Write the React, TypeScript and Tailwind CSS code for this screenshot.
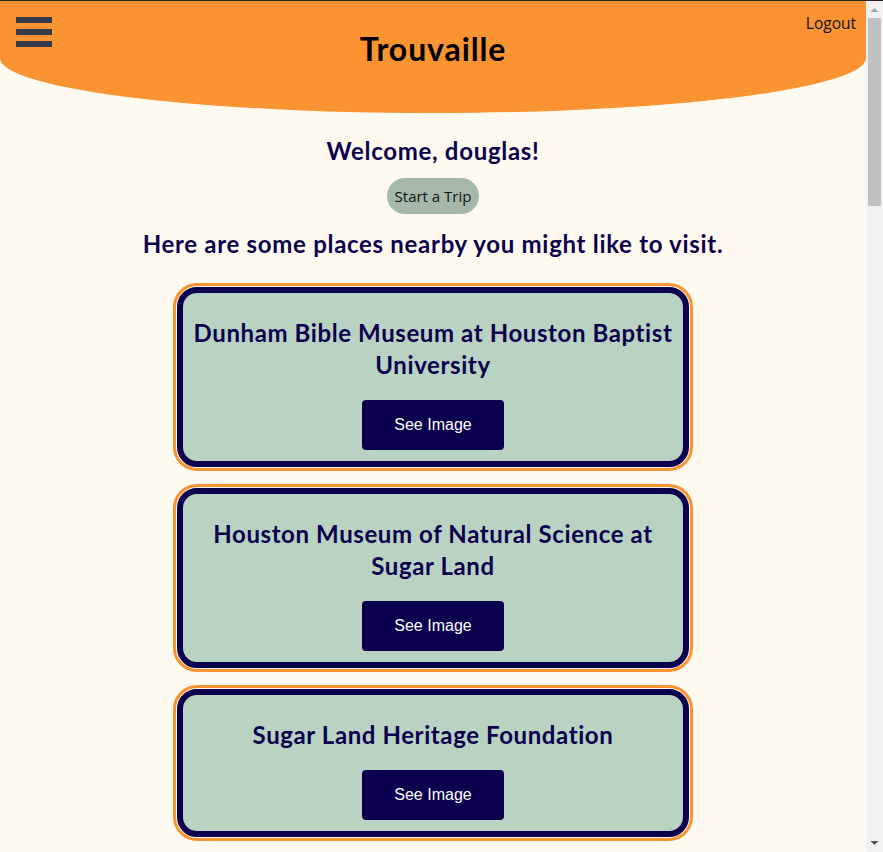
import React from 'react';

const places = [
  { id: 1, name: 'Dunham Bible Museum at Houston Baptist University' },
  { id: 2, name: 'Houston Museum of Natural Science at Sugar Land' },
  { id: 3, name: 'Sugar Land Heritage Foundation' },
];

const heading = "font-['Lato','Open_Sans',sans-serif]";

const App: React.FC = () => {
  return (
    <div className="flex h-[852px] overflow-hidden bg-[#fffaf0] border-t border-[#222]">
      <div className="w-[866px] shrink-0">
        <header className="grid grid-cols-[1fr_auto_1fr] h-[112px] bg-[#fa9331] rounded-bl-[50%_55px] rounded-br-[50%_55px]">
          <div className="flex flex-col gap-[6px] pl-4 pt-4">
            <span className="block w-9 h-[6px] bg-[#363a4b]"></span>
            <span className="block w-9 h-[6px] bg-[#363a4b]"></span>
            <span className="block w-9 h-[6px] bg-[#363a4b]"></span>
          </div>
          <h1 className={`${heading} text-[32px] font-bold text-black leading-10 pt-[28px] tracking-[0.9px]`}>Trouvaille</h1>
          <div className="flex justify-end pr-[10px] pt-[10px]">
            <span className="font-['Open_Sans',sans-serif] text-[15.5px] text-[#111] leading-6">Logout</span>
          </div>
        </header>

        <main className="flex flex-col items-center pb-10">
          <h2 className={`${heading} mt-[22px] text-[24px] leading-8 font-bold text-[#0a004d] tracking-[0.7px]`}>Welcome, douglas!</h2>
          <button className="mt-[11px] h-9 px-2 rounded-full bg-[#a5b8a9] text-[15px] text-[#111] font-['Open_Sans',sans-serif]">
            Start a Trip
          </button>
          <h2 className={`${heading} mt-[14px] text-[24px] leading-8 font-bold text-[#0a004d] tracking-[0.7px]`}>
            Here are some places nearby you might like to visit.
          </h2>

          <div className="mt-[23px] flex flex-col gap-[13px] w-[520px]">
            {places.map((p) => (
              <div key={p.id} className="border-[3px] border-[#fa9331] rounded-[24px] p-px bg-[#fffaf0]">
                <div className="border-[6px] border-[#0a004d] rounded-[20px] bg-[#b8d3c2] flex flex-col items-center pt-6 pb-[11px] px-[4px]">
                  <h3 className={`${heading} text-[24px] leading-8 font-bold text-[#0a004d] text-center tracking-[0.6px]`}>{p.name}</h3>
                  <button className="mt-[19px] w-[142px] h-[50px] rounded bg-[#0a004d] text-white text-[16px] font-['Liberation_Sans',Arial,sans-serif]">
                    See Image
                  </button>
                </div>
              </div>
            ))}
          </div>
        </main>
      </div>

      {/* browser scrollbar */}
      <div className="w-[17px] shrink-0 bg-[#f1f1f1] flex flex-col items-center">
        <svg width="17" height="17" viewBox="0 0 17 17" className="shrink-0">
          <path d="M4.5 11 L8.5 7 L12.5 11 Z" fill="#a3a3a3" />
        </svg>
        <div className="w-[13px] h-[188px] bg-[#c1c1c1]"></div>
        <div className="flex-1"></div>
        <svg width="17" height="17" viewBox="0 0 17 17" className="shrink-0">
          <path d="M4.5 6 L8.5 10 L12.5 6 Z" fill="#505050" />
        </svg>
      </div>
    </div>
  );
};

export default App;
